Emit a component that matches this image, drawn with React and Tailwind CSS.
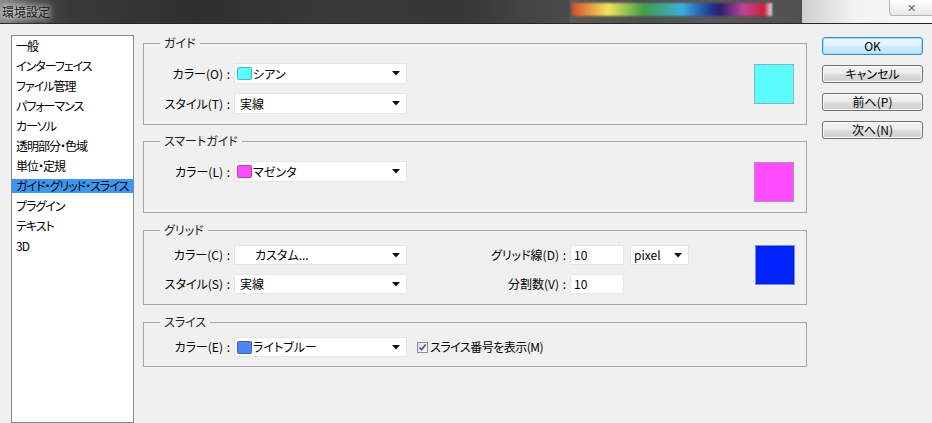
import React from "react";

const items = [
  "一般",
  "インターフェイス",
  "ファイル管理",
  "パフォーマンス",
  "カーソル",
  "透明部分・色域",
  "単位・定規",
  "ガイド・グリッド・スライス",
  "プラグイン",
  "テキスト",
  "3D",
];

function Arrow() {
  return (
    <svg width="8" height="5" viewBox="0 0 8 5" className="mr-[6px] shrink-0">
      <polygon points="0,0 8,0 4,4.5" fill="#111" />
    </svg>
  );
}

function Select({ swatch, text, indent, w, h }) {
  return (
    <div className={`flex items-center bg-white border border-[#e6e6e6] ${w} ${h}`}>
      {swatch ? (
        <div className={`ml-[2px] w-[15px] h-[13px] rounded-[2px] border border-black/25 ${swatch}`} />
      ) : null}
      <span className={`flex-1 whitespace-nowrap ${indent}`}>{text}</span>
      <Arrow />
    </div>
  );
}

function Btn({ children, primary }) {
  return (
    <div
      className={
        primary
          ? "h-[18px] w-[101px] mb-[10px] flex items-center justify-center rounded-[3px] border border-[#3c8fc6] bg-[linear-gradient(#eef8fe,#e0f2fd_50%,#cbe9fb_50%,#bfe3fa)] shadow-[inset_0_0_0_1px_#9fdcf8]"
          : "h-[18px] w-[101px] mb-[10px] flex items-center justify-center rounded-[3px] border border-[#707070] bg-[linear-gradient(#f3f3f3,#ebebeb_50%,#dddddd_50%,#cfcfcf)] shadow-[inset_0_0_0_1px_#fbfbfb]"
      }
    >
      {children}
    </div>
  );
}

function Label({ children, w }) {
  return (
    <div className={`${w} flex justify-end whitespace-nowrap`}>
      <span>{children}</span>
      <span className="w-[11px] text-center">:</span>
    </div>
  );
}

export default function App() {
  return (
    <div className="w-[932px] h-[423px] overflow-hidden bg-[#f0f0f0] flex flex-col text-[12px] leading-[16px] text-black font-['Noto_Sans_CJK_JP',sans-serif] [font-feature-settings:'palt']">
      {/* title bar */}
      <div className="h-[24px] flex shrink-0 border-b border-[#262626]">
        <div className="w-[570px] flex items-center bg-[linear-gradient(to_right,#8a8a8a,#4a4a4a_6%,#3a3a3a_12%,#2f2f2f_35%,#3a3a3a_60%,#363636_80%,#4c4c4c)]">
          <span className="pl-[2px] text-[12px] text-[#1a1a1a] [text-shadow:0_0_6px_#ffffff,0_0_10px_#ffffff]">
            環境設定
          </span>
        </div>
        <div className="w-[232px] bg-[linear-gradient(to_right,#5a5a5a,#4e4e4e_30%,#585858_60%,#505050)] pl-[2px] pt-[3px]">
          <div className="w-[200px] h-[13px] blur-[1px] bg-[linear-gradient(to_right,#d4502c,#f2e35c_18%,#3f9f46_36%,#3aaee0_55%,#1f3590_70%,#2a1f6a_74%,#c2449a_86%,#c81f3a_96%,#e8e8e8)]" />
        </div>
        <div className="flex-1 flex justify-end items-start bg-[linear-gradient(to_right,#cfcfcf,#f2f2f2_40%,#fafafa)]">
          <div className="w-[43px] h-[16px] flex items-center justify-center rounded-bl-[4px] border-l border-b border-[#b5b5b5] bg-[linear-gradient(#ffffff,#e8e8e8)] text-[11px] text-[#666] leading-none">
            ✕
          </div>
        </div>
      </div>

      {/* body */}
      <div className="flex-1 flex pt-[11px] min-h-0">
        {/* category list */}
        <div className="ml-[11px] w-[123px] border border-[#828790] bg-white flex flex-col tracking-[-1px]">
          {items.map((it, i) => (
            <div key={it} className="h-[20px] flex items-center">
              <div
                className={
                  i === 7
                    ? "w-full h-[14px] leading-[14px] pl-[4px] bg-[#3d97f0] whitespace-nowrap"
                    : "w-full h-[14px] leading-[14px] pl-[4px] whitespace-nowrap"
                }
              >
                {it}
              </div>
            </div>
          ))}
        </div>

        {/* groups */}
        <div className="ml-[9px] w-[664px] flex flex-col">
          {/* ガイド */}
          <fieldset className="border border-[#a5a5a5] pt-[12px] pb-[10px] pr-[12px] flex">
            <legend className="ml-[16px] px-[4px] text-[#222]">ガイド</legend>
            <div className="flex-1 flex flex-col gap-[9px]">
              <div className="flex items-center">
                <Label w="w-[90px]">カラー(O)</Label>
                <Select w="w-[173px]" h="h-[21px]" swatch="bg-[#5cfdfd]" text="シアン" indent="pl-[1px]" />
              </div>
              <div className="flex items-center">
                <Label w="w-[90px]">スタイル(T)</Label>
                <Select w="w-[173px]" h="h-[21px]" text="実線" indent="pl-[5px]" />
              </div>
            </div>
            <div className="mt-[1px] w-[40px] h-[40px] bg-[#5cfdfd] border border-[#88b5b5]" />
          </fieldset>

          {/* スマートガイド */}
          <fieldset className="mt-[8px] border border-[#a5a5a5] pt-[12px] pb-[10px] pr-[12px] flex">
            <legend className="ml-[16px] px-[4px] text-[#222]">スマートガイド</legend>
            <div className="flex-1 flex flex-col">
              <div className="flex items-center">
                <Label w="w-[90px]">カラー(L)</Label>
                <Select w="w-[173px]" h="h-[21px]" swatch="bg-[#ff4cff]" text="マゼンタ" indent="pl-[1px]" />
              </div>
            </div>
            <div className="mt-[1px] w-[40px] h-[40px] bg-[#ff4cff] border border-[#c286c2]" />
          </fieldset>

          {/* グリッド */}
          <fieldset className="mt-[9px] border border-[#a5a5a5] pt-[7px] pb-[10px] pr-[11px] flex">
            <legend className="ml-[16px] px-[4px] text-[#222]">グリッド</legend>
            <div className="flex-1 flex flex-col gap-[9px]">
              <div className="flex items-center">
                <Label w="w-[90px]">カラー(C)</Label>
                <Select w="w-[173px]" h="h-[20px]" text="カスタム..." indent="pl-[20px]" />
                <Label w="w-[163px]">グリッド線(D)</Label>
                <div className="w-[54px] h-[20px] bg-white border border-[#e6e6e6] flex items-center pl-[3px]">10</div>
                <div className="ml-[6px]">
                  <Select w="w-[59px]" h="h-[20px]" text="pixel" indent="pl-[3px]" />
                </div>
              </div>
              <div className="flex items-center">
                <Label w="w-[90px]">スタイル(S)</Label>
                <Select w="w-[173px]" h="h-[20px]" text="実線" indent="pl-[5px]" />
                <Label w="w-[163px]">分割数(V)</Label>
                <div className="w-[54px] h-[20px] bg-white border border-[#e6e6e6] flex items-center pl-[3px]">10</div>
              </div>
            </div>
            <div className="w-[40px] h-[40px] bg-[#0022fb] border border-[#7c8ad6]" />
          </fieldset>

          {/* スライス */}
          <fieldset className="mt-[9px] border border-[#a5a5a5] pt-[7px] pb-[9px] flex">
            <legend className="ml-[16px] px-[4px] text-[#222]">スライス</legend>
            <div className="flex items-center">
              <Label w="w-[90px]">カラー(E)</Label>
              <Select w="w-[173px]" h="h-[20px]" swatch="bg-[#4f86f7]" text="ライトブルー" indent="pl-[1px]" />
              <div className="ml-[10px] w-[11px] h-[11px] border border-[#8e8f8f] bg-[linear-gradient(135deg,#dcdcdc,#ffffff)] flex items-center justify-center">
                <svg width="9" height="9" viewBox="0 0 9 9">
                  <path d="M1.5 4.5 L3.6 6.8 L7.6 1.5" fill="none" stroke="#3b5aa0" strokeWidth="1.6" />
                </svg>
              </div>
              <span className="ml-[2px] whitespace-nowrap tracking-[-0.5px]">スライス番号を表示(M)</span>
            </div>
          </fieldset>
        </div>

        {/* buttons */}
        <div className="ml-[15px] mt-[2px] flex flex-col">
          <Btn primary>OK</Btn>
          <Btn>キャンセル</Btn>
          <Btn>前へ(P)</Btn>
          <Btn>次へ(N)</Btn>
        </div>
      </div>
    </div>
  );
}
